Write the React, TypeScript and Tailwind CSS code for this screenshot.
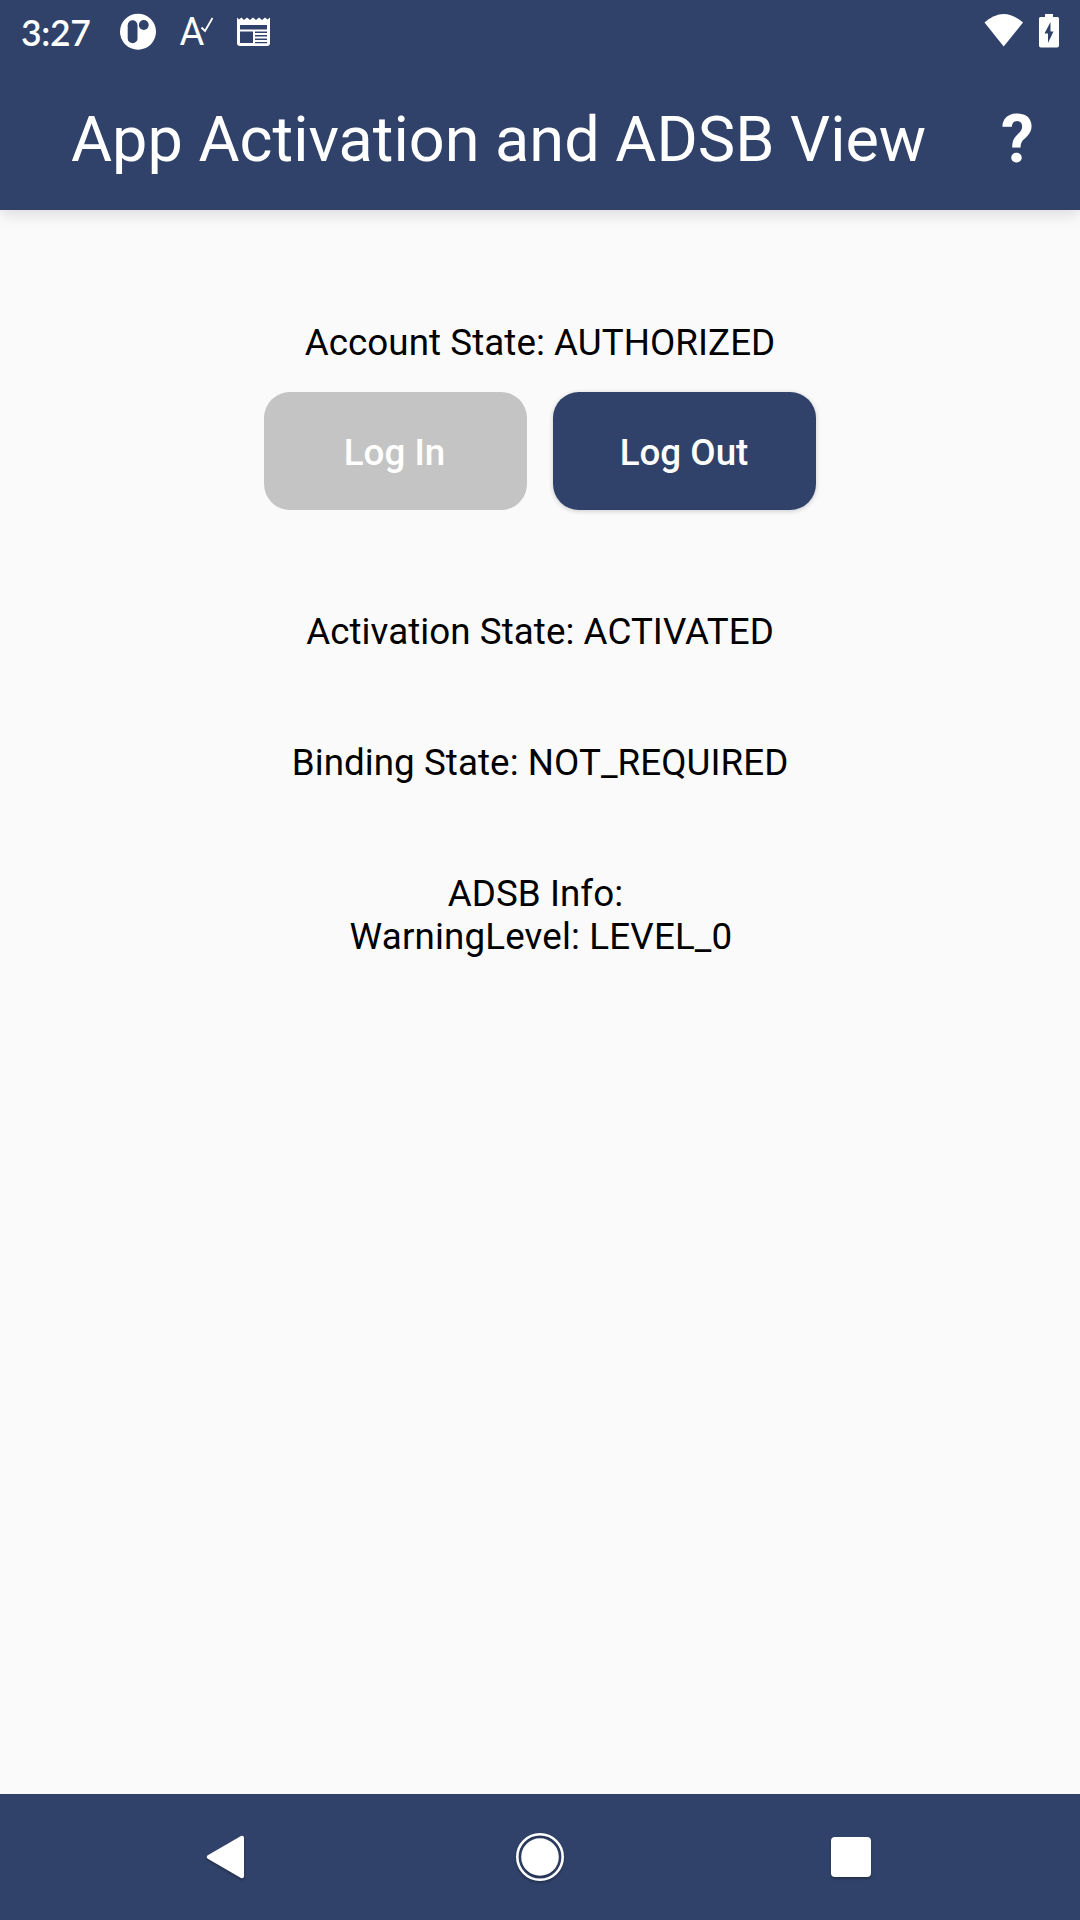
import type { ReactNode } from 'react';

function StatusBar() {
  return (
    <div className="flex h-[63px] items-center justify-between pr-[19px] pl-[21px] text-white">
      <div className="flex items-center">
        <span className="w-[99px] pt-[2px] font-['Lato',sans-serif] text-[35.5px] leading-[61px] font-semibold tracking-[-0.3px]">
          3:27
        </span>
        <svg className="h-[63px] w-[36px]" viewBox="0 0 36 63">
          <circle cx="18" cy="31.7" r="18" fill="#fff" />
          <rect x="7.7" y="20.3" width="9.8" height="23" rx="4.9" fill="#304269" />
          <circle cx="23.8" cy="25" r="4.9" fill="#304269" />
        </svg>
        <svg className="ml-[23px] h-[63px] w-[36px]" viewBox="0 0 36 63">
          <text x="0.5" y="45" fill="#fff" fontSize="38" fontFamily="Roboto, sans-serif">
            A
          </text>
          <path d="M22.5 27.5 26 31 33.5 18" fill="none" stroke="#fff" strokeWidth="1.8" />
        </svg>
        <svg className="ml-[22px] h-[63px] w-[33px]" viewBox="0 0 33 63">
          <path
            fill="#fff"
            fillRule="evenodd"
            d="M0 17.5 2 19.500 4.500 17.500 7 20 10 17.500 13 20 16 17.500 19 20 22 17.500 25 20 28 17.500 30.500 19.500 33 17.500V43q0 3-3 3H3q-3 0-3-3ZM3 25v4.500H30V25ZM3 31.500V43H16V31.500ZM18 31.500V33H30v-1.500ZM18 35v1.500H30V35ZM18 38.500V40H30v-1.500ZM18 42v1.300H30V42Z"
          />
        </svg>
      </div>
      <div className="flex items-center gap-[12px]">
        <svg className="h-[63px] w-[42px]" viewBox="0 0 42 63">
          <path d="M1.500 22.500Q20.500 5.500 40 22.500L20.700 46.500Z" fill="#fff" />
        </svg>
        <svg className="h-[63px] w-[24px]" viewBox="0 0 24 63">
          <path
            fill="#fff"
            fillRule="evenodd"
            d="M8 14h8v3h4.500q1.500 0 1.500 1.500v27q0 2-2 2H4q-2 0-2-2v-27Q2 17 3.500 17H8ZM13.500 22 7.500 33.500h3.500V43l5.500-11.500h-3Z"
          />
        </svg>
      </div>
    </div>
  );
}

function StateText({ children, className = '' }: { children: ReactNode; className?: string }) {
  return (
    <p
      className={`text-center text-[36.75px] leading-[43px] tracking-[0.06px] whitespace-pre text-black ${className}`}
    >
      {children}
    </p>
  );
}

function NavBar() {
  return (
    <nav className="flex h-[126px] items-center justify-center bg-[#304269]">
      <button className="flex w-[315px] justify-center">
        <svg className="h-12 w-12 drop-shadow-[0_2px_1px_rgba(0,0,0,0.25)]" viewBox="0 0 48 48">
          <path
            d="M7.800 24 41 4.800V43.200Z"
            fill="#fff"
            stroke="#fff"
            strokeWidth="4"
            strokeLinejoin="round"
          />
        </svg>
      </button>
      <button className="flex w-[315px] justify-center">
        <svg
          className="h-12 w-12 overflow-visible drop-shadow-[0_2px_1px_rgba(0,0,0,0.25)]"
          viewBox="0 0 48 48"
        >
          <circle cx="24" cy="24" r="22.700" fill="none" stroke="#fff" strokeWidth="2.600" />
          <circle cx="24" cy="24" r="18.800" fill="#fff" />
        </svg>
      </button>
      <button className="flex w-[315px] justify-center">
        <svg className="h-12 w-12 drop-shadow-[0_2px_1px_rgba(0,0,0,0.25)]" viewBox="0 0 48 48">
          <rect x="0" y="4" width="40" height="40" rx="4" fill="#fff" />
        </svg>
      </button>
    </nav>
  );
}

export default function App() {
  return (
    <div className="flex h-[1920px] w-[1080px] flex-col bg-[#fafafa] font-['Roboto',sans-serif]">
      <header className="h-[210px] bg-[#304269] shadow-[0_4px_14px_rgba(0,0,0,0.13)]">
        <StatusBar />
        <div className="flex h-[147px] items-center pt-[6px] pl-[71px] text-white">
          <h1 className="w-[930px] text-[63px] leading-[74px] whitespace-nowrap">
            App Activation and ADSB View
          </h1>
          <button className="text-[66px] leading-[74px] font-bold">?</button>
        </div>
      </header>

      <main className="flex flex-1 flex-col items-center pt-[111px]">
        <StateText>Account State: AUTHORIZED</StateText>
        <div className="mt-[28px] flex gap-[26px]">
          <button
            disabled
            className="h-[118px] w-[263px] rounded-[26px] bg-[#c4c4c4] pt-[4px] pr-[2px] text-[36.75px] font-medium text-white"
          >
            Log In
          </button>
          <button className="h-[118px] w-[263px] rounded-[26px] bg-[#304269] pt-[4px] pr-[1px] text-[36.75px] font-medium text-white shadow-[0_1px_5px_rgba(0,0,0,0.2)]">
            Log Out
          </button>
        </div>
        <StateText className="mt-[100px]">Activation State: ACTIVATED</StateText>
        <StateText className="mt-[88px]">Binding State: NOT_REQUIRED</StateText>
        <StateText className="mt-[88px]">{'ADSB Info: '}</StateText>
        <StateText className="pl-[2px] tracking-[0.15px]">WarningLevel: LEVEL_0</StateText>
      </main>

      <NavBar />
    </div>
  );
}
